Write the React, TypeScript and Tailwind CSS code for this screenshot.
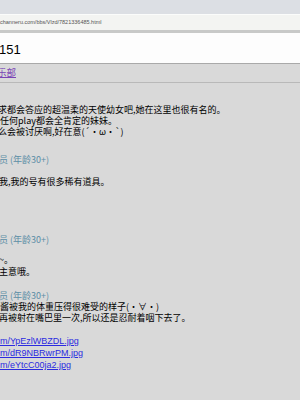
const cjk = { fontFamily: '"Noto Sans CJK SC", "Noto Sans", sans-serif' };

const Meta = ({ className = "" }: { className?: string }) => (
  <div className={`text-[9px] leading-[11px] text-[#5b8ea6] ${className}`}>员 (年龄30+)</div>
);

export default function App() {
  return (
    <div className="w-[300px] h-[400px] overflow-hidden bg-[#d9d9d9] flex flex-col" style={cjk}>
      <div className="h-[14px] bg-[#dcdfe4] shrink-0" />
      <div className="h-[16px] shrink-0 bg-[#f3f4f2] border-t border-[#fbfcfb] flex items-center">
        <span className="text-[5.5px] text-[#555] whitespace-nowrap" style={{ fontFamily: '"Liberation Sans", sans-serif' }}>
          channeru.com/bbs/Vlzd/7821336485.html
        </span>
      </div>
      <div className="h-[3px] shrink-0 bg-[#c8c9c8]" />
      <div className="h-[31px] shrink-0 bg-[#fdfdfd] border-b border-[#a9a9a9] flex items-end pb-[7px]">
        <span className="text-[13px] leading-none text-black -ml-[1px]" style={{ fontFamily: '"Liberation Sans", sans-serif' }}>151</span>
      </div>
      <div className="h-[19px] shrink-0 border-b border-[#b9b9b9] flex items-center">
        <a className="text-[9.5px] leading-none text-[#7a45b5] underline -ml-[3px]">乐部</a>
      </div>

      <div className="text-[9px] leading-[11px] text-black whitespace-nowrap">
        <div className="mt-[21px] -ml-[2px]">
          <div>求都会答应的超温柔的天使幼女吧,她在这里也很有名的。</div>
          <div className="whitespace-pre"> 任何play都会全肯定的妹妹。</div>
          <div>么会被讨厌啊,好在意(´・ω・`)</div>
        </div>
        <Meta className="mt-[17px] -ml-[1px]" />
        <div className="mt-[11px] -ml-[1px]">我,我的号有很多稀有道具。</div>

        <Meta className="mt-[47px] -ml-[1px]" />
        <div className="mt-[9px] leading-[12px] -ml-[1px]">
          <div>~。</div>
          <div>主意哦。</div>
        </div>

        <Meta className="mt-[12px] -ml-[1px]" />
        <div>酱被我的体重压得很难受的样子(・∀・)</div>
        <div className="-ml-[1px]">再被射在嘴巴里一次,所以还是忍耐着咽下去了。</div>

        <div
          className="mt-[12px] text-[9px] leading-[12px] text-[#2b2be0]"
          style={{ fontFamily: '"Liberation Sans", sans-serif' }}
        >
          <a className="block underline">m/YpEzlWBZDL.jpg</a>
          <a className="block underline">m/dR9NBRwrPM.jpg</a>
          <a className="block underline">m/eYtcC00ja2.jpg</a>
        </div>
      </div>
    </div>
  );
}
